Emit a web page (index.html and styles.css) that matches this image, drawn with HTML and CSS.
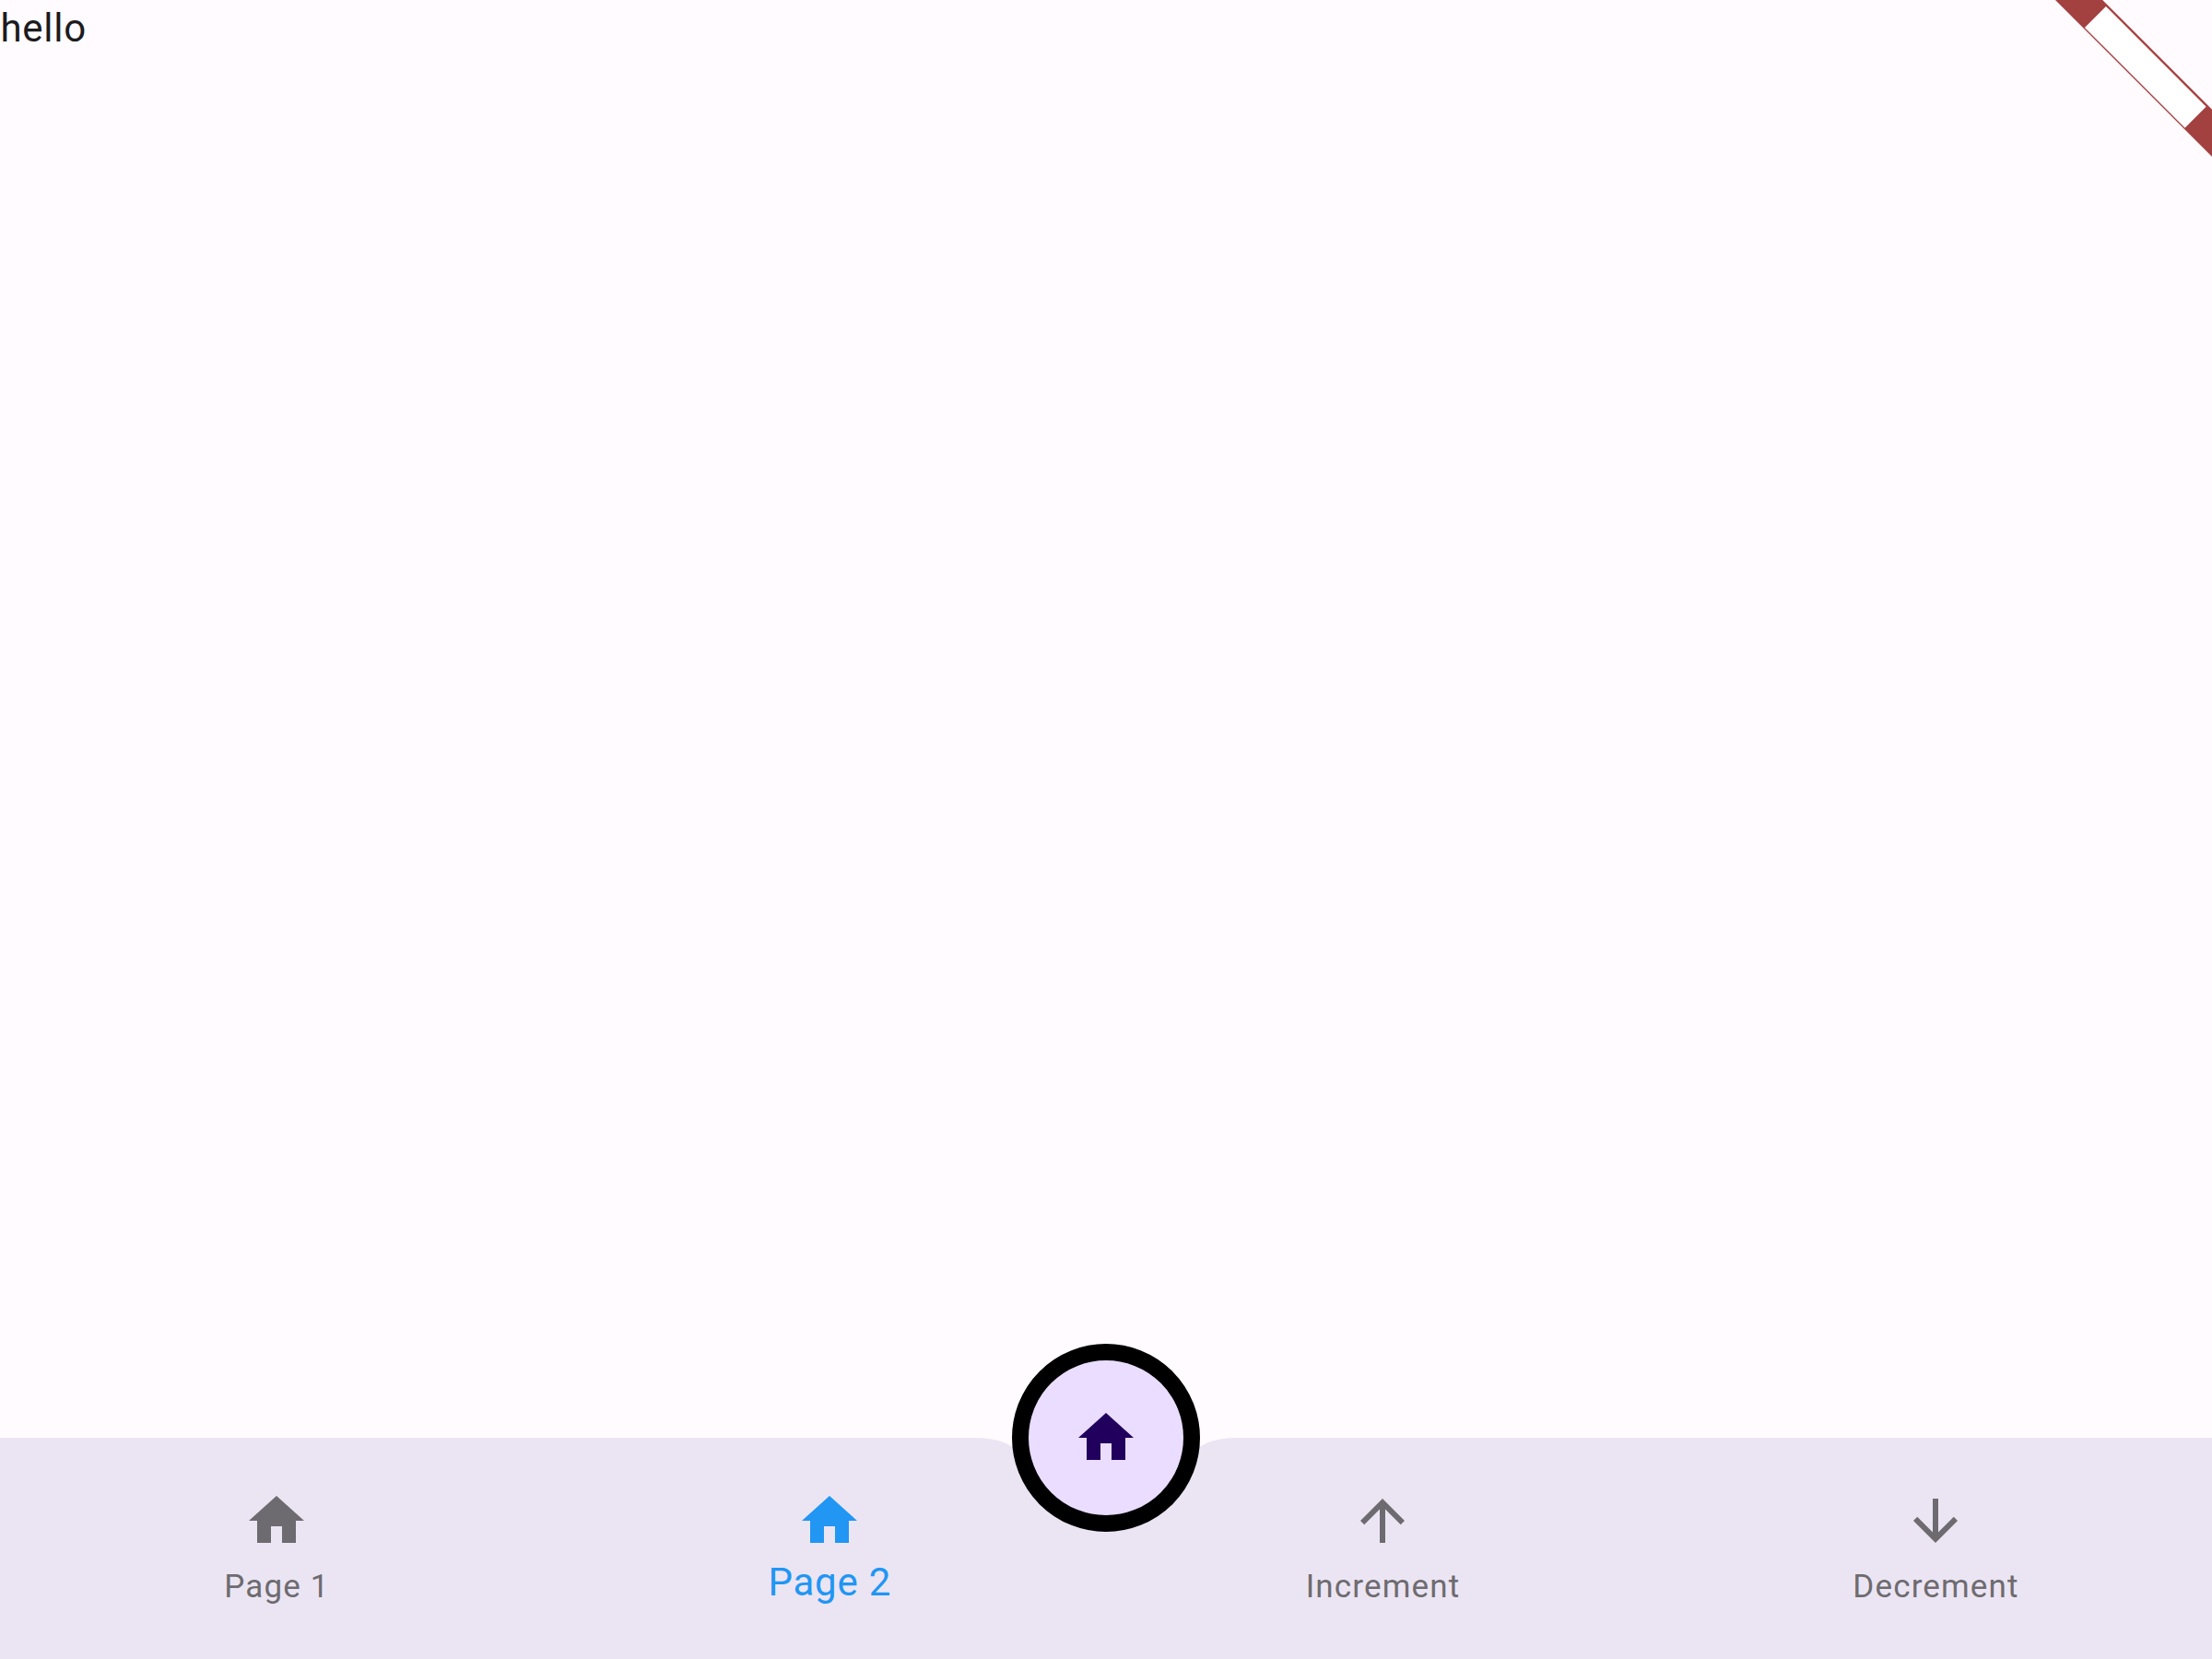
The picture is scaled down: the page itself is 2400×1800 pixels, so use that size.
FILE: index.html
```html
<!DOCTYPE html>
<html lang="en">
<head>
<meta charset="utf-8">
<title>hello</title>
<link rel="stylesheet" href="styles.css">
</head>
<body>
<div class="app">
  <svg class="symbols" aria-hidden="true">
    <symbol id="home" viewBox="0 0 24 24"><path d="M10 20v-6h4v6h5v-8h3L12 3 2 12h3v8z"/></symbol>
    <symbol id="up" viewBox="0 0 24 24"><path d="M4 12l1.41 1.41L11 7.83V20h2V7.83l5.58 5.59L20 12l-8-8-8 8z"/></symbol>
    <symbol id="down" viewBox="0 0 24 24"><path d="M20 12l-1.41-1.41L13 16.17V4h-2v12.17l-5.58-5.59L4 12l8 8 8-8z"/></symbol>
  </svg>
  <main class="content">hello</main>
  <nav class="bar">
    <svg class="bar-shape" viewBox="0 0 2400 240"><path d="M0 0H1056Q1101 0 1106.9 23.5A96 96 0 0 0 1293.1 23.5Q1299 0 1344 0H2400V240H0Z"/></svg>
    <a class="item"><svg class="icon"><use href="#home"/></svg><span class="label">Page 1</span></a>
    <a class="item selected"><svg class="icon"><use href="#home"/></svg><span class="label">Page 2</span></a>
    <a class="item"><svg class="icon"><use href="#up"/></svg><span class="label">Increment</span></a>
    <a class="item"><svg class="icon"><use href="#down"/></svg><span class="label">Decrement</span></a>
    <button class="fab" aria-label="Home"><svg class="icon"><use href="#home"/></svg></button>
  </nav>
  <svg class="banner" viewBox="-180 0 180 180"><g transform="rotate(45)"><path class="ribbon" d="M-125 84H125V120.2H-125Z"/><path class="plate" d="M-76.5 86.3H77.3V118.8H-76.5Z"/></g></svg>
</div>
</body>
</html>
```
FILE: styles.css
```css
body {
  margin: 0;
  font-family: Roboto, sans-serif;
}
.app {
  position: relative;
  display: flex;
  flex-direction: column;
  width: 2400px;
  height: 1800px;
  overflow: hidden;
  background: #fffbff;
}
.symbols {
  position: absolute;
  width: 0;
  height: 0;
}
.content {
  flex: 1;
  padding: 1px 0 0 0.4px;
  font-size: 42px;
  line-height: 60px;
  letter-spacing: 0.75px;
  color: #1c1b1e;
}
.bar {
  position: relative;
  display: flex;
  height: 240px;
}
.bar-shape {
  position: absolute;
  inset: 0;
  width: 2400px;
  height: 240px;
  fill: #ebe5f3;
}
.item {
  position: relative;
  flex: 1;
  display: flex;
  flex-direction: column;
  align-items: center;
  padding-top: 54px;
  color: #6e6b70;
}
.icon {
  display: block;
  width: 72px;
  height: 72px;
  fill: currentColor;
}
.label {
  margin-top: 12px;
  padding-left: 1px;
  font-size: 35px;
  line-height: 48px;
  letter-spacing: 1.15px;
}
.selected {
  color: #2196f3;
}
.selected .label {
  margin-top: 1px;
  padding-left: 0.5px;
  font-size: 42px;
  line-height: 60px;
  letter-spacing: 0.75px;
}
.fab {
  position: absolute;
  left: 1098px;
  top: -102px;
  box-sizing: border-box;
  width: 204px;
  height: 204px;
  display: flex;
  align-items: center;
  justify-content: center;
  padding: 0;
  border: 18px solid #000;
  border-radius: 50%;
  background: #eaddff;
  color: #21005d;
}
.banner {
  position: absolute;
  top: 0;
  right: 0;
  width: 180px;
  height: 180px;
}
.ribbon {
  fill: #a34040;
}
.plate {
  fill: #fff;
}
```
